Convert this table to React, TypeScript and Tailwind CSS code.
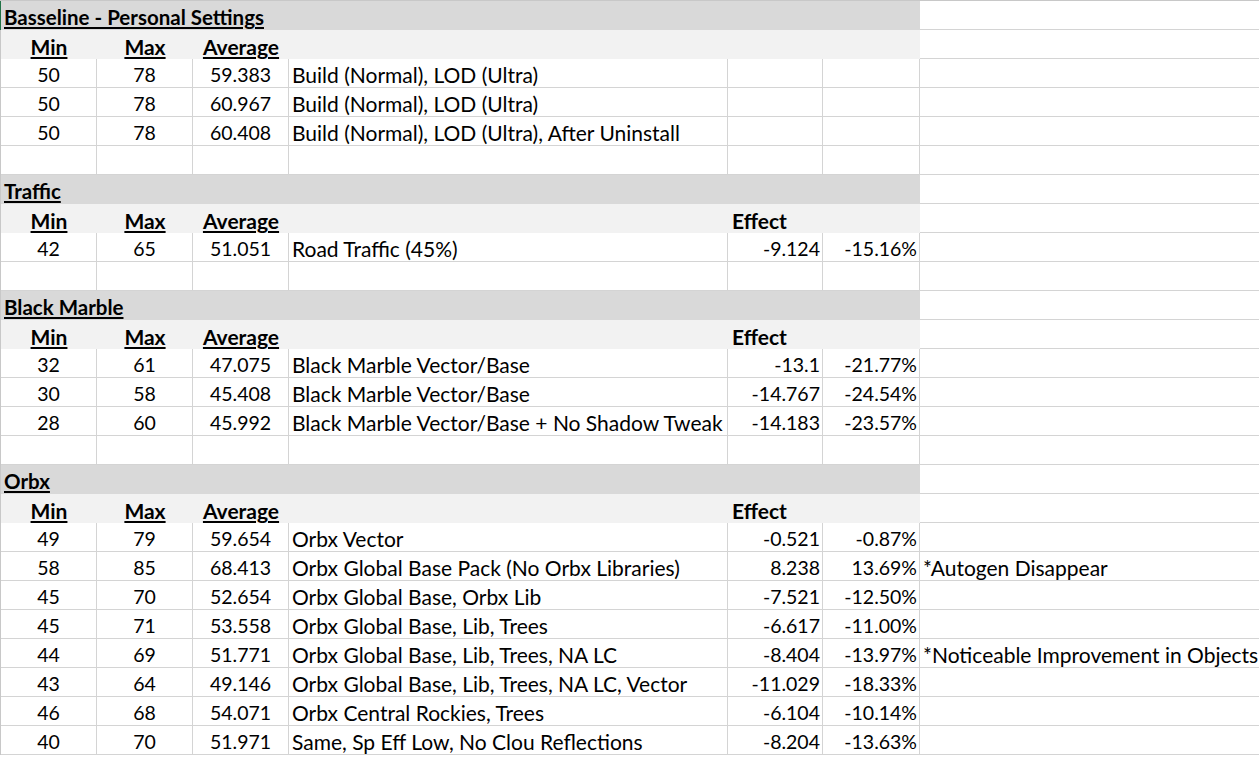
import React from 'react';

type DataRow = {
  min: string;
  max: string;
  avg: string;
  desc: string;
  effect?: string;
  pct?: string;
  note?: string;
};

type Section = {
  title: string;
  showEffect: boolean;
  rows: DataRow[];
};

const SECTIONS: Section[] = [
  {
    title: 'Basseline - Personal Settings',
    showEffect: false,
    rows: [
      { min: '50', max: '78', avg: '59.383', desc: 'Build (Normal), LOD (Ultra)' },
      { min: '50', max: '78', avg: '60.967', desc: 'Build (Normal), LOD (Ultra)' },
      { min: '50', max: '78', avg: '60.408', desc: 'Build (Normal), LOD (Ultra), After Uninstall' },
    ],
  },
  {
    title: 'Traffic',
    showEffect: true,
    rows: [{ min: '42', max: '65', avg: '51.051', desc: 'Road Traffic (45%)', effect: '-9.124', pct: '-15.16%' }],
  },
  {
    title: 'Black Marble',
    showEffect: true,
    rows: [
      { min: '32', max: '61', avg: '47.075', desc: 'Black Marble Vector/Base', effect: '-13.1', pct: '-21.77%' },
      { min: '30', max: '58', avg: '45.408', desc: 'Black Marble Vector/Base', effect: '-14.767', pct: '-24.54%' },
      { min: '28', max: '60', avg: '45.992', desc: 'Black Marble Vector/Base + No Shadow Tweak', effect: '-14.183', pct: '-23.57%' },
    ],
  },
  {
    title: 'Orbx',
    showEffect: true,
    rows: [
      { min: '49', max: '79', avg: '59.654', desc: 'Orbx Vector', effect: '-0.521', pct: '-0.87%' },
      { min: '58', max: '85', avg: '68.413', desc: 'Orbx Global Base Pack (No Orbx Libraries)', effect: '8.238', pct: '13.69%', note: '*Autogen Disappear' },
      { min: '45', max: '70', avg: '52.654', desc: 'Orbx Global Base, Orbx Lib', effect: '-7.521', pct: '-12.50%' },
      { min: '45', max: '71', avg: '53.558', desc: 'Orbx Global Base, Lib, Trees', effect: '-6.617', pct: '-11.00%' },
      { min: '44', max: '69', avg: '51.771', desc: 'Orbx Global Base, Lib, Trees, NA LC', effect: '-8.404', pct: '-13.97%', note: '*Noticeable Improvement in Objects' },
      { min: '43', max: '64', avg: '49.146', desc: 'Orbx Global Base, Lib, Trees, NA LC, Vector', effect: '-11.029', pct: '-18.33%' },
      { min: '46', max: '68', avg: '54.071', desc: 'Orbx Central Rockies, Trees', effect: '-6.104', pct: '-10.14%' },
      { min: '40', max: '70', avg: '51.971', desc: 'Same, Sp Eff Low, No Clou Reflections', effect: '-8.204', pct: '-13.63%' },
    ],
  },
];

// numbers sit a touch smaller than prose so both match the sheet's widths
const cell = 'h-full shrink-0 flex items-end pb-px leading-[22px] whitespace-nowrap';
const num = 'text-[19.5px]';
const prose = 'text-[21px]';

function TitleRow({ title, first }: { title: string; first?: boolean }) {
  return (
    <div className={`flex h-[29px] border-l ${first ? 'border-l-[#217346]' : 'border-l-[#c8c8c8]'}`}>
      <div className={`${cell} text-[20.5px] w-[919px] bg-[#d9d9d9] border-b border-[#d9d9d9] pl-[3px] font-bold`}>
        <span className="underline decoration-2 underline-offset-[2px]">{title}</span>
      </div>
      <div className="h-full flex-1 border-b border-[#d4d4d4]" />
    </div>
  );
}

function HeaderRow({ showEffect }: { showEffect: boolean }) {
  const hd = 'underline decoration-2 underline-offset-[2px]';
  return (
    <div className="flex h-[29px] border-l border-l-[#c8c8c8]">
      <div className={`flex h-full w-[919px] shrink-0 bg-[#f2f2f2] font-bold ${prose}`}>
        <div className={`${cell} w-[96px] justify-center`}><span className={hd}>Min</span></div>
        <div className={`${cell} w-[96px] justify-center`}><span className={hd}>Max</span></div>
        <div className={`${cell} w-[96px] justify-center`}><span className={hd}>Average</span></div>
        <div className={`${cell} w-[439px]`} />
        <div className={`${cell} w-[95px] pl-[4px]`}>{showEffect ? 'Effect' : ''}</div>
        <div className={`${cell} flex-1`} />
      </div>
      <div className="h-full flex-1 border-b border-[#d4d4d4]" />
    </div>
  );
}

function Row({ r }: { r?: DataRow }) {
  const b = 'border-r border-b border-[#d4d4d4]';
  return (
    <div className="flex h-[29px] border-l border-l-[#c8c8c8]">
      <div className={`${cell} ${b} ${num} w-[96px] justify-center`}>{r?.min}</div>
      <div className={`${cell} ${b} ${num} w-[96px] justify-center`}>{r?.max}</div>
      <div className={`${cell} ${b} ${num} w-[96px] justify-center`}>{r?.avg}</div>
      <div className={`${cell} ${b} ${prose} w-[439px] pl-[3px]`}>{r?.desc}</div>
      <div className={`${cell} ${b} ${num} w-[95px] justify-end pr-[2px]`}>{r?.effect}</div>
      <div className={`${cell} ${b} ${num} w-[97px] justify-end pr-[2px]`}>{r?.pct}</div>
      <div className={`${cell} ${prose} flex-1 border-b border-[#d4d4d4] pl-[3px]`}>{r?.note}</div>
    </div>
  );
}

export default function App() {
  return (
    <div
      className="h-[757px] w-[1259px] overflow-hidden bg-white text-black border-t border-[#c8c8c8]"
      style={{ fontFamily: 'Lato, "Open Sans", sans-serif' }}
    >
      {SECTIONS.map((s, i) => (
        <div key={s.title}>
          <TitleRow title={s.title} first={i === 0} />
          <HeaderRow showEffect={s.showEffect} />
          {s.rows.map((r, j) => (
            <Row key={j} r={r} />
          ))}
          {i < SECTIONS.length - 1 && <Row />}
        </div>
      ))}
    </div>
  );
}
